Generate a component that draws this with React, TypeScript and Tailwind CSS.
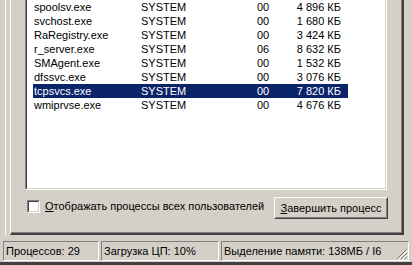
import React from "react";

type Proc = {
  name: string;
  user: string;
  cpu: string;
  mem: string;
};

const procs: Proc[] = [
  { name: "spoolsv.exe", user: "SYSTEM", cpu: "00", mem: "4 896 КБ" },
  { name: "svchost.exe", user: "SYSTEM", cpu: "00", mem: "1 680 КБ" },
  { name: "RaRegistry.exe", user: "SYSTEM", cpu: "00", mem: "3 424 КБ" },
  { name: "r_server.exe", user: "SYSTEM", cpu: "06", mem: "8 632 КБ" },
  { name: "SMAgent.exe", user: "SYSTEM", cpu: "00", mem: "1 532 КБ" },
  { name: "dfssvc.exe", user: "SYSTEM", cpu: "00", mem: "3 076 КБ" },
  { name: "tcpsvcs.exe", user: "SYSTEM", cpu: "00", mem: "7 820 КБ" },
  { name: "wmiprvse.exe", user: "SYSTEM", cpu: "00", mem: "4 676 КБ" },
];

const SELECTED = 6;

function ProcessRow({ proc, selected }: { proc: Proc; selected: boolean }) {
  return (
    <div
      className={`flex h-[14px] w-[315px] items-center whitespace-nowrap leading-[14px] ${
        selected ? "bg-[#0a246a] text-white" : "text-black"
      }`}
    >
      <span className="w-[108px] shrink-0 pl-[1px]">{proc.name}</span>
      <span className="w-[116px] shrink-0">{proc.user}</span>
      <span className="w-[28px] shrink-0">{proc.cpu}</span>
      <span className="w-[56px] shrink-0 text-right">{proc.mem}</span>
    </div>
  );
}

export default function App() {
  return (
    <div
      className="relative flex h-[265px] w-[412px] flex-col overflow-hidden bg-[#d4d0c8] text-[11px] text-black"
      style={{ fontFamily: '"Liberation Sans", Arial, sans-serif' }}
    >
      {/* window body with task manager tab page */}
      <div className="flex h-[235px] shrink-0">
        <div className="h-full w-[10px] shrink-0 pl-[5px]">
          <div className="h-full w-[1px] bg-white" />
        </div>
        <div className="flex h-full w-[394px] flex-col border-b-2 border-l border-r-2 border-b-[#404040] border-l-white border-r-[#404040]">
          <div className="flex flex-1 flex-col border-b border-r border-b-[#808080] border-r-[#808080] pl-[14px] pr-[14px]">
            {/* process list */}
            <div className="h-[190px] w-[362px] border-b border-l border-r border-b-white border-l-[#808080] border-r-white">
              <div className="h-full border-b border-l border-r border-b-[#d4d0c8] border-l-[#404040] border-r-[#d4d0c8] bg-white pl-[6px]">
                {procs.map((p, i) => (
                  <ProcessRow key={p.name} proc={p} selected={i === SELECTED} />
                ))}
              </div>
            </div>

            <div className="mt-[7px] flex items-start justify-between">
              <label className="mt-[1px] flex items-center gap-[5px] pl-[2px]">
                <span className="h-[13px] w-[13px] border border-b-white border-l-[#808080] border-r-white border-t-[#808080]">
                  <span className="block h-full w-full border border-b-[#d4d0c8] border-l-[#404040] border-r-[#d4d0c8] border-t-[#404040] bg-white" />
                </span>
                <span>
                  <span className="underline">О</span>тображать процессы всех пользователей
                </span>
              </label>
              <button
                type="button"
                className="mr-[-1px] h-[22px] w-[114px] border border-b-[#404040] border-l-white border-r-[#404040] border-t-white bg-[#d4d0c8]"
              >
                <span className="flex h-full w-full items-center justify-center border border-b-[#808080] border-l-[#d4d0c8] border-r-[#808080] border-t-[#d4d0c8]">
                  <span>
                    <span className="underline">З</span>авершить процесс
                  </span>
                </span>
              </button>
            </div>
          </div>
        </div>
      </div>

      {/* status bar */}
      <div className="mt-[6px] flex h-[20px] items-stretch gap-[2px] px-[3px]">
        <div className="flex w-[96px] items-center border border-b-white border-l-[#808080] border-r-white border-t-[#808080] pl-[2px]">
          Процессов: 29
        </div>
        <div className="flex w-[118px] items-center border border-b-white border-l-[#808080] border-r-white border-t-[#808080] pl-[2px]">
          Загрузка ЦП: 10%
        </div>
        <div className="relative flex flex-1 items-center border border-b-white border-l-[#808080] border-r-white border-t-[#808080] pl-[2px]">
          Выделение памяти: 138МБ / I6
          <svg
            className="absolute bottom-0 right-0"
            width="12"
            height="12"
            viewBox="0 0 12 12"
          >
            <path d="M11 1 L1 11 M11 5 L5 11 M11 9 L9 11" stroke="#808080" strokeWidth="1" />
            <path d="M12 2 L2 12 M12 6 L6 12 M12 10 L10 12" stroke="#ffffff" strokeWidth="1" />
          </svg>
        </div>
      </div>
      <div className="mt-auto h-[3px] bg-[#404040]" />
    </div>
  );
}
